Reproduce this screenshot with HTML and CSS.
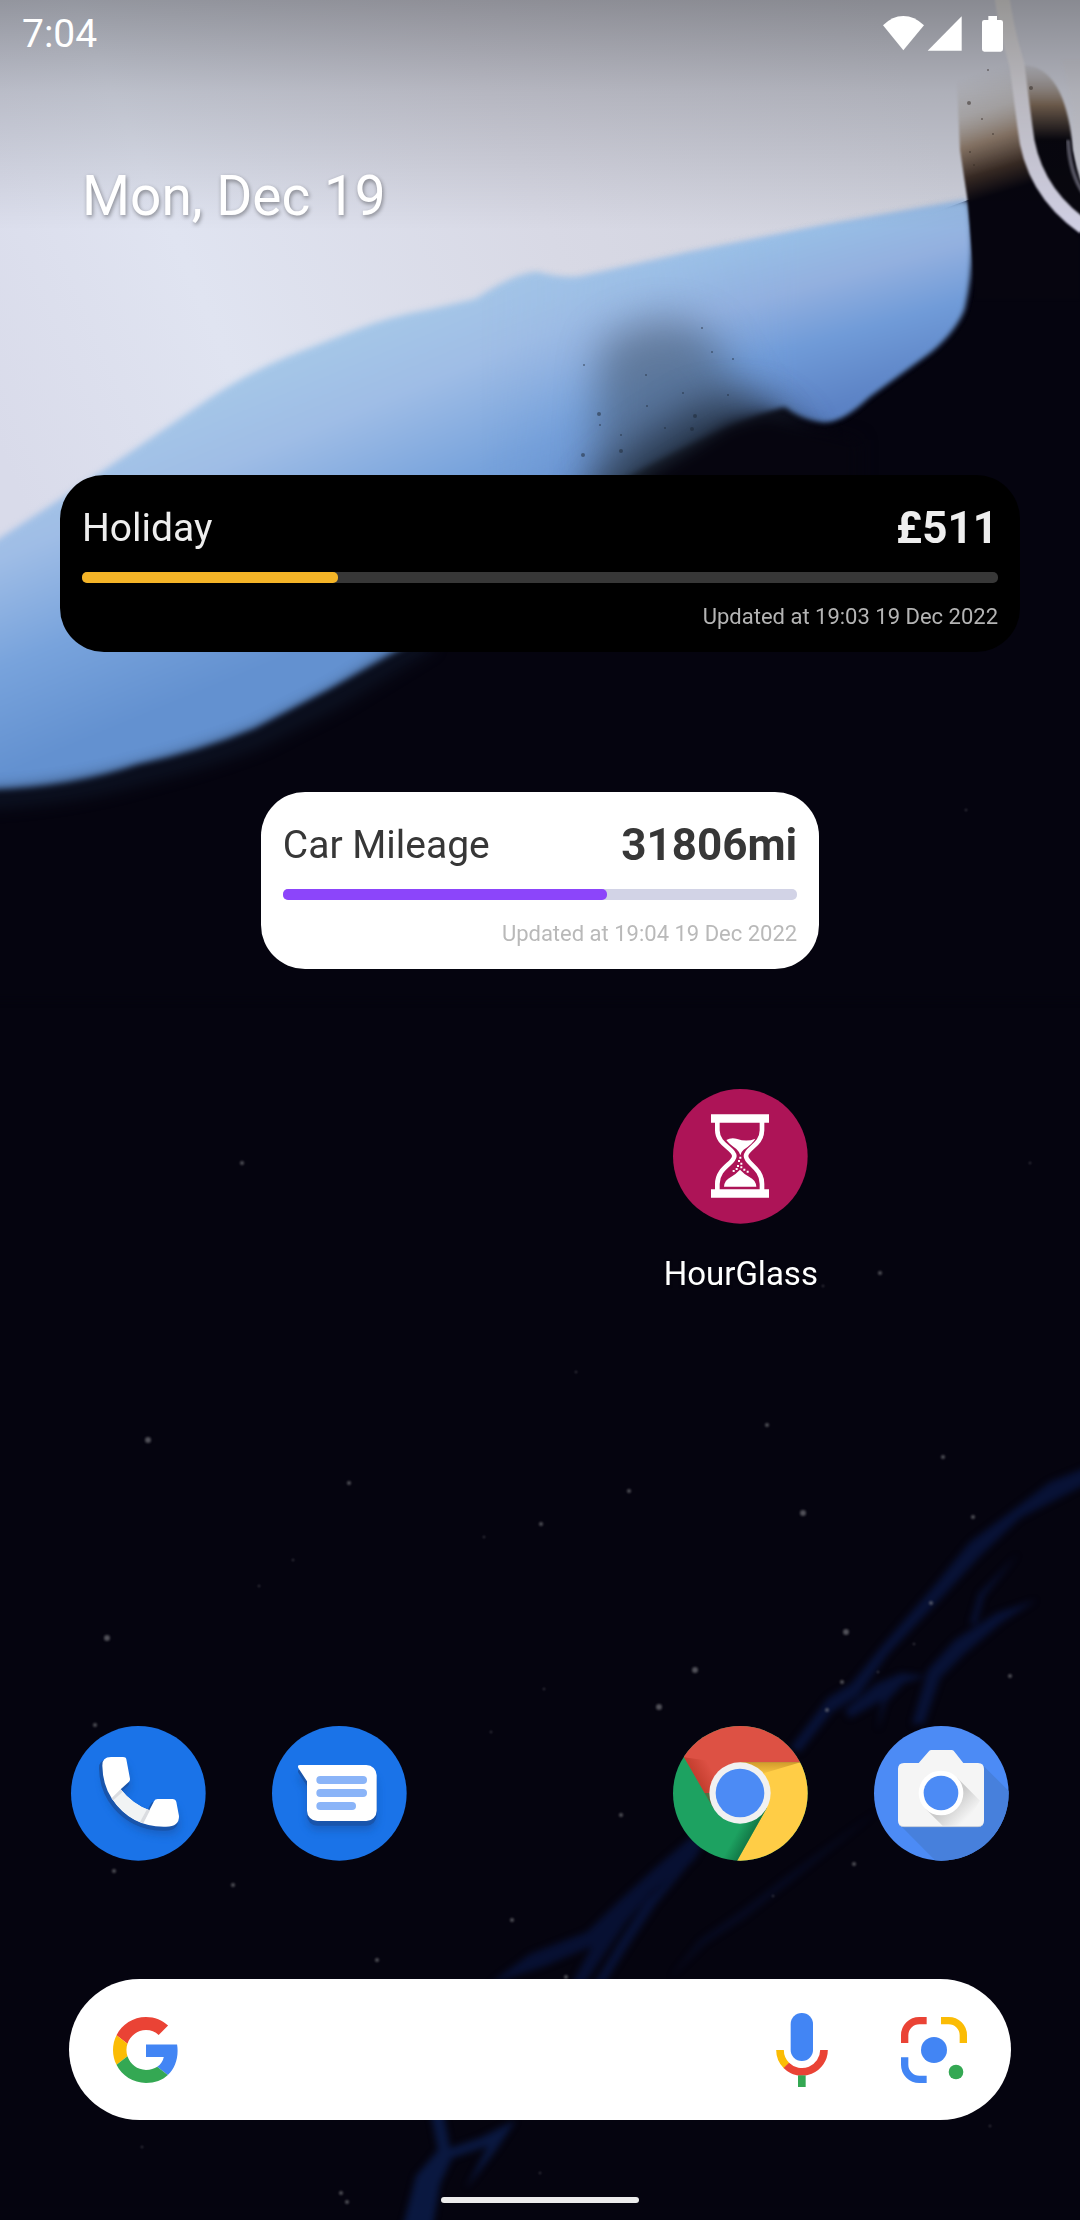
FILE: index.html
```html
<!DOCTYPE html>
<html lang="en">
<head>
<meta charset="utf-8">
<meta name="viewport" content="width=device-width, initial-scale=1">
<title>Home screen</title>
<link rel="stylesheet" href="styles.css">
</head>
<body>
<div class="screen">
  <svg class="wallpaper" viewBox="0 0 1080 2220" preserveAspectRatio="xMidYMin slice" aria-hidden="true">
    <defs>
      <linearGradient id="sky" gradientUnits="userSpaceOnUse" x1="0" y1="450" x2="900" y2="60"><stop offset="0" stop-color="#d9dbea"/><stop offset=".25" stop-color="#e0e4f1"/><stop offset=".6" stop-color="#d8d9e5"/><stop offset="1" stop-color="#cfd1dc"/></linearGradient>
      <linearGradient id="wave" gradientUnits="userSpaceOnUse" x1="290" y1="345" x2="400" y2="610"><stop offset="0" stop-color="#a6c8e8"/><stop offset=".3" stop-color="#9fbde6"/><stop offset=".65" stop-color="#78a3dc"/><stop offset="1" stop-color="#6391d0"/></linearGradient>
      <linearGradient id="tip" gradientUnits="userSpaceOnUse" x1="800" y1="230" x2="850" y2="410"><stop offset="0" stop-color="#98bfe6"/><stop offset=".3" stop-color="#93b0df"/><stop offset=".6" stop-color="#709bd8"/><stop offset="1" stop-color="#5a80c3"/></linearGradient>
      <linearGradient id="tipmask" gradientUnits="userSpaceOnUse" x1="480" y1="0" x2="800" y2="0"><stop offset="0" stop-color="#000"/><stop offset="1" stop-color="#fff"/></linearGradient>
      <mask id="tipfade" maskUnits="userSpaceOnUse" x="0" y="0" width="1080" height="900"><rect width="1080" height="900" fill="url(#tipmask)"/></mask>
      <linearGradient id="burn" gradientUnits="userSpaceOnUse" x1="975" y1="75" x2="1010" y2="190"><stop offset="0" stop-color="#b4afa6" stop-opacity="0"/><stop offset=".3" stop-color="#aba39a" stop-opacity=".5"/><stop offset=".55" stop-color="#897360" stop-opacity=".9"/><stop offset=".8" stop-color="#3a2c25"/><stop offset="1" stop-color="#06050f"/></linearGradient>
      <linearGradient id="burn2" gradientUnits="userSpaceOnUse" x1="0" y1="62" x2="0" y2="140"><stop offset="0" stop-color="#a09a94" stop-opacity=".1"/><stop offset=".55" stop-color="#7b6755"/><stop offset="1" stop-color="#08070f"/></linearGradient>
      <linearGradient id="shade" x1="0" y1="0" x2="0" y2="1"><stop offset="0" stop-color="#000" stop-opacity=".34"/><stop offset=".4" stop-color="#000" stop-opacity=".16"/><stop offset="1" stop-color="#000" stop-opacity="0"/></linearGradient>
      <linearGradient id="wire" x1="0" y1="0" x2="0" y2="1"><stop offset="0" stop-color="#e4e2e0"/><stop offset="1" stop-color="#d0cfe4"/></linearGradient>
      <filter id="b1" color-interpolation-filters="sRGB"><feGaussianBlur stdDeviation="1"/></filter>
      <filter id="b3" x="-10%" y="-10%" width="120%" height="120%" color-interpolation-filters="sRGB"><feGaussianBlur stdDeviation="3"/></filter>
      <filter id="b6" x="-20%" y="-20%" width="140%" height="140%" color-interpolation-filters="sRGB"><feGaussianBlur stdDeviation="8"/></filter>
      <filter id="b18" x="-50%" y="-50%" width="200%" height="200%" color-interpolation-filters="sRGB"><feGaussianBlur stdDeviation="20"/></filter>
      <clipPath id="above"><rect width="1080" height="520"/></clipPath>
    </defs>
    <rect width="1080" height="2220" fill="#05040f"/>
    <path d="M-20 -20H1100V180L968 200L700 300L200 520L-20 640Z" fill="url(#sky)"/>
    <path d="M972 201Q979 257 967 311Q957 333 930 355L868 401Q842 424 823 423L620 480L420 655L331 700L255 738Q200 765 138 776Q60 800 -30 800V1000H1120V196L1050 150Z" fill="#05040f" filter="url(#b3)"/>
    <path d="M-40 565L0 538L62 498L138 447L213 396Q250 372 289 356L358 329Q392 316 427 310L475 299Q512 274 537 272Q560 279 579 277Q640 264 689 253L826 226L967 201Q975 257 963 309Q954 331 930 351L868 396Q842 421 823 421Q800 418 785 405Q730 420 620 480L418 640L331 689L255 729Q200 752 138 765Q60 792 -40 791Z" fill="url(#wave)" filter="url(#b3)"/>
    <path d="M480 299Q512 274 537 272Q560 279 579 277Q640 264 689 253L826 226L967 201Q975 257 963 309Q954 331 930 351L868 396Q842 421 823 421Q800 418 785 405Q730 420 620 480L480 520Z" fill="url(#tip)" filter="url(#b3)" mask="url(#tipfade)"/>
    <path d="M-40 800Q60 798 142 774Q200 760 258 738L336 698L430 640" fill="none" stroke="#10192b" stroke-width="16" opacity=".75" filter="url(#b6)"/>
    <g clip-path="url(#above)">
      <path d="M600 345Q660 300 710 335L750 400L780 430V540H590Z" fill="#3f4d5e" opacity=".5" filter="url(#b18)"/>
      <path d="M590 540V490L640 445L700 405L760 400L800 430V540Z" fill="#18222f" opacity=".7" filter="url(#b18)"/>
      <path d="M605 560L645 478L690 450L730 424L765 415L805 426L860 440V560Z" fill="#06050f" filter="url(#b6)"/>
      <g fill="#1d2734" opacity=".5"><circle cx="584" cy="365" r="1"/><circle cx="599" cy="414" r="2"/><circle cx="583" cy="455" r="2"/><circle cx="621" cy="451" r="2"/><circle cx="647" cy="406" r="1"/><circle cx="683" cy="393" r="1"/><circle cx="695" cy="416" r="2"/><circle cx="733" cy="359" r="1"/><circle cx="702" cy="328" r="1"/><circle cx="712" cy="352" r="1"/><circle cx="665" cy="428" r="1"/><circle cx="646" cy="375" r="1"/><circle cx="621" cy="435" r="1"/><circle cx="600" cy="425" r="1"/><circle cx="728" cy="395" r="1"/><circle cx="692" cy="429" r="2"/></g>
    </g>
    <path d="M956 62Q985 50 1022 70L1027 130L1045 200L1080 240V300H976L968 203L960 150Z" fill="url(#burn)" filter="url(#b1)"/>
    <path d="M1018 66Q1045 62 1060 93Q1070 115 1073 150L1084 192V236L1050 195L1030 150Z" fill="url(#burn2)" filter="url(#b1)"/>
    <path d="M1073 110L1074 145Q1076 180 1090 200V60H1062Z" fill="#cfd0d9" filter="url(#b1)"/>
    <path d="M1068 140Q1070 175 1084 194" fill="none" stroke="#5c5b69" stroke-width="4" filter="url(#b1)"/>
    <path d="M1001 -10Q1006 30 1017 65Q1021 95 1025 127Q1031 190 1084 227" fill="none" stroke="url(#wire)" stroke-width="15" filter="url(#b1)"/>
    <g fill="#362b25" opacity=".5"><circle cx="969" cy="103" r="2"/><circle cx="1031" cy="88" r="2"/><circle cx="988" cy="70" r="1"/><circle cx="970" cy="152" r="1"/><circle cx="982" cy="119" r="1"/><circle cx="993" cy="134" r="1"/><circle cx="974" cy="165" r="1"/></g>
    <rect width="1080" height="230" fill="url(#shade)"/>
    <g fill="#081236" filter="url(#b3)">
      <path d="M1090 1466L1050 1482L1016 1508L970 1542L935 1585L882 1646L851 1684L828 1698L790 1748L800 1752L832 1712L858 1696L888 1654L943 1596L980 1556L1020 1518L1090 1482Z"/>
      <path d="M1036 1600L997 1613L955 1640L928 1670L912 1724L924 1724L940 1678L964 1654L1002 1622ZM979 1594L970 1624L976 1624L984 1596L1018 1554Z"/>
      <path d="M926 1676L901 1673L876 1684L845 1710L850 1718L882 1700L878 1730L886 1702L904 1683Z"/>
      <path d="M716 1822L690 1838L655 1868L620 1900L587 1932L530 1954L490 1984L545 1966L592 1946L572 1984H584L626 1922L650 1894L694 1860Z" opacity=".9"/>
      <path d="M694 1858L646 1900L620 1940L594 1984H604L632 1940L656 1904Z"/>
      <path d="M880 1809L786 1877L740 1912L700 1940L670 1978L704 1944L744 1918L790 1882Z" opacity=".5"/>
      <path d="M430 2110L438 2150L416 2176L402 2230H432L440 2184L452 2158L488 2146L466 2188L496 2150L516 2120L480 2138L450 2148L443 2110Z" fill="#0a1840"/>
    </g>
    <g fill="#85868c" opacity=".6" filter="url(#b1)">
      <circle cx="148" cy="1440" r="3"/><circle cx="803" cy="1513" r="3"/><circle cx="943" cy="1457" r="2"/><circle cx="107" cy="1638" r="3"/><circle cx="695" cy="1670" r="3"/><circle cx="659" cy="1707" r="3"/><circle cx="846" cy="1632" r="3"/><circle cx="842" cy="1682" r="2"/><circle cx="1010" cy="1676" r="2"/><circle cx="931" cy="1603" r="2"/><circle cx="827" cy="1710" r="2"/><circle cx="541" cy="1524" r="2"/><circle cx="629" cy="1491" r="2"/><circle cx="349" cy="1483" r="2"/><circle cx="293" cy="1560" r="1"/><circle cx="973" cy="1517" r="2"/><circle cx="767" cy="1425" r="2"/><circle cx="621" cy="1815" r="2"/><circle cx="854" cy="1864" r="2"/><circle cx="114" cy="1871" r="2"/><circle cx="233" cy="1885" r="2"/><circle cx="512" cy="1920" r="2"/><circle cx="377" cy="1960" r="2"/><circle cx="566" cy="1977" r="2"/><circle cx="773" cy="1896" r="1"/><circle cx="242" cy="1163" r="2"/><circle cx="880" cy="1273" r="2"/><circle cx="823" cy="1286" r="1"/><circle cx="1030" cy="1163" r="1"/><circle cx="966" cy="810" r="1"/><circle cx="576" cy="1372" r="1"/><circle cx="341" cy="2193" r="2"/><circle cx="347" cy="2202" r="2"/><circle cx="540" cy="2173" r="1"/><circle cx="990" cy="2126" r="1"/><circle cx="142" cy="2147" r="1"/><circle cx="491" cy="1732" r="1"/><circle cx="544" cy="1689" r="1"/><circle cx="259" cy="1586" r="1"/><circle cx="484" cy="1537" r="1"/><circle cx="95" cy="1725" r="2"/><circle cx="914" cy="1644" r="1"/><circle cx="878" cy="1672" r="1"/>
    </g>
  </svg>

  <header class="status">
    <time class="clock">7:04</time>
    <svg class="signals" viewBox="69 45 360 108" role="img" aria-label="Wi-Fi, mobile signal, battery"><g fill="#fff"><path d="M69 73Q97 45 130 45T192 73L130 148Z"/><path d="M203 149L305 46V149Z"/><path d="M385 45H411V57H422Q429 57 429 64V145Q429 152 422 152H373Q366 152 366 145V64Q366 57 373 57H385Z"/></g></svg>
  </header>

  <main class="home">
    <time class="date" datetime="2022-12-19">Mon, Dec 19</time>
    <section class="card card-dark">
      <div class="card-head"><label class="card-title" for="holiday">Holiday</label><strong class="card-value">£511</strong></div>
      <progress class="meter" id="holiday" value="28" max="100"></progress>
      <p class="card-note">Updated at 19:03 19 Dec 2022</p>
    </section>
    <section class="card card-light">
      <div class="card-head"><label class="card-title" for="mileage">Car Mileage</label><strong class="card-value">31806mi</strong></div>
      <progress class="meter" id="mileage" value="63" max="100"></progress>
      <p class="card-note">Updated at 19:04 19 Dec 2022</p>
    </section>
    <a class="app app-fourth" href="#hourglass">
      <svg class="app-icon" viewBox="0 0 405 405" aria-hidden="true">
        <circle cx="202" cy="202" r="202" fill="#ad1457"/>
        <g fill="#fff"><path d="M114 76H288V101H114ZM114 301H288V326H114Z"/>
        <path d="M160 153Q174 145 193 150Q221 160 247 149Q239 164 212 182Q204 188 202 199Q199 188 190 180Q166 163 160 153Z"/>
        <path d="M153 293Q154 273 175 263Q190 254 201 242Q212 254 228 263Q249 273 250 293Z"/>
        <path d="M199 203h6v6h-6zM195 213h6v6h-6zM202 221h6v6h-6zM192 228h6v6h-6zM202 232h6v6h-6zM188 237h6v6h-6zM179 243h6v6h-6zM211 239h6v6h-6zM221 245h6v6h-6z"/></g>
        <path d="M133 99V124C133 168 184 178 184 201C184 224 133 236 133 285V303M267 99V124C267 168 219 178 219 201C219 224 267 236 267 285V303" fill="none" stroke="#fff" stroke-width="14"/>
      </svg>
      <span class="app-name">HourGlass</span>
    </a>
  </main>

  <nav class="dock" aria-label="Favourite apps">
    <a class="app" href="#phone" aria-label="Phone">
      <svg class="app-icon" viewBox="0 0 405 405" aria-hidden="true">
        <defs><filter id="soft" x="-30%" y="-30%" width="160%" height="160%"><feGaussianBlur stdDeviation="12"/></filter>
        <path id="handset" d="M94 119Q93 93 120 93H156Q165 93 166 100L177 158Q178 163 174 167L149 190Q185 235 235 253L249 226Q252 219 260 219H304Q314 219 316 228L324 270Q325 302 285 302Q180 305 122 217Q95 175 94 119Z"/></defs>
        <circle cx="202" cy="202" r="202" fill="#1a73e8"/>
        <use href="#handset" x="2" y="24" fill="#134a96" opacity=".45" filter="url(#soft)"/>
        <use href="#handset" x="-10" y="8" fill="#1955ac"/><use href="#handset" x="-3" y="12" fill="#1955ac"/>
        <use href="#handset" fill="#fff"/>
        <path d="M122 217L149 190Q185 235 235 253L207 288Q154 266 122 217Z" fill="#f1f3f4"/>
        <path d="M122 217L149 190L155 197L127 223ZM207 288L228 250L237 253L217 292Z" fill="#dadce0"/>
      </svg>
    </a>
    <a class="app" href="#messages" aria-label="Messages">
      <svg class="app-icon" viewBox="0 0 405 405" aria-hidden="true">
        <defs><path id="bubble" d="M84 117H283A31 31 0 0 1 314 148V254A31 31 0 0 1 283 285H136A31 31 0 0 1 105 254V166L79 126Q75 117 84 117Z"/></defs>
        <circle cx="202" cy="202" r="202" fill="#1a73e8"/>
        <use href="#bubble" y="28" fill="#134a96" opacity=".45" filter="url(#soft)"/>
        <use href="#bubble" y="14" fill="#1955ac"/><use href="#bubble" fill="#fff"/>
        <g fill="#8ab4f8"><rect x="133" y="150" width="152" height="24" rx="12"/><rect x="133" y="189" width="152" height="24" rx="12"/><rect x="133" y="228" width="119" height="24" rx="12"/></g>
      </svg>
    </a>
    <a class="app app-fourth" href="#chrome" aria-label="Chrome">
      <svg class="app-icon" viewBox="0 0 405 405" aria-hidden="true">
        <defs><clipPath id="disc"><circle cx="202" cy="202" r="202"/></clipPath>
        <linearGradient id="rs" gradientUnits="userSpaceOnUse" x1="78" y1="172" x2="125" y2="145"><stop offset="0" stop-color="#a52714" stop-opacity=".45"/><stop offset="1" stop-color="#a52714" stop-opacity="0"/></linearGradient>
        <linearGradient id="ys" gradientUnits="userSpaceOnUse" x1="0" y1="109" x2="0" y2="145"><stop offset="0" stop-color="#bf8620" stop-opacity=".7"/><stop offset="1" stop-color="#bf8620" stop-opacity=".1"/></linearGradient>
        <linearGradient id="gs" gradientUnits="userSpaceOnUse" x1="232" y1="335" x2="194" y2="314"><stop offset="0" stop-color="#0b5d36" stop-opacity=".6"/><stop offset="1" stop-color="#0b5d36" stop-opacity="0"/></linearGradient></defs>
        <g clip-path="url(#disc)"><rect width="405" height="405" fill="#1da261"/>
        <path d="M201 109H405V405H192L281 247Z" fill="#ffcd46"/>
        <path d="M33 94L-10 0H405V109H201V201H95Z" fill="#dd5144"/>
        <path d="M33 94L121 247L201 201L150 110Z" fill="url(#rs)"/>
        <path d="M201 109H383L260 145Z" fill="url(#ys)"/>
        <path d="M281 247L192 405H130L215 270Z" fill="url(#gs)"/></g>
        <circle cx="201" cy="201" r="92" fill="#f1f1f1"/><circle cx="201" cy="201" r="73" fill="#4c8bf5"/>
      </svg>
    </a>
    <a class="app" href="#camera" aria-label="Camera">
      <svg class="app-icon" viewBox="0 0 405 405" aria-hidden="true">
        <defs><linearGradient id="ls" gradientUnits="userSpaceOnUse" x1="230" y1="230" x2="278" y2="278"><stop offset="0" stop-color="#b5b5b5"/><stop offset="1" stop-color="#f5f5f5"/></linearGradient></defs>
        <circle cx="202" cy="202" r="202" fill="#4c8bf5"/>
        <path d="M325 116L405 196V405H185L78 297Z" fill="#4780dc" clip-path="url(#disc)"/>
        <path d="M90 111H134L166 74Q168 72 172 72H233Q237 72 239 74L268 111H312Q330 111 330 129V284Q330 302 312 302H90Q72 302 72 284V129Q72 111 90 111Z" fill="#f5f5f5"/>
        <path d="M77 297Q82 302 90 302H312Q320 302 325 297" fill="none" stroke="#c9cbd0" stroke-width="2"/>
        <path d="M248 154L318 224L272 299H206L154 248Z" fill="url(#ls)" opacity=".65"/>
        <circle cx="201" cy="201" r="67" fill="#fff"/><circle cx="201" cy="201" r="52" fill="#4c8bf5"/>
      </svg>
    </a>
  </nav>

  <form class="search" role="search">
    <svg class="glyph" viewBox="0 0 48 48" role="img" aria-label="Google"><path fill="#ea4335" d="M24 9.500c3.540 0 6.710 1.220 9.210 3.600l6.850-6.850C35.900 2.380 30.470 0 24 0 14.620 0 6.510 5.380 2.560 13.220l7.980 6.190C12.430 13.720 17.740 9.500 24 9.500z"/><path fill="#4285f4" d="M46.980 24.550c0-1.570-.15-3.090-.38-4.550H24v9.020h12.940c-.58 2.960-2.260 5.480-4.780 7.180l7.730 6c4.510-4.180 7.090-10.360 7.090-17.650z"/><path fill="#fbbc05" d="M10.530 28.590c-.48-1.450-.76-2.990-.76-4.590s.27-3.140.76-4.590l-7.980-6.190C.92 16.460 0 20.120 0 24c0 3.880.92 7.540 2.560 10.780l7.970-6.190z"/><path fill="#34a853" d="M24 48c6.480 0 11.930-2.130 15.890-5.810l-7.730-6c-2.150 1.450-4.920 2.300-8.160 2.300-6.260 0-11.570-4.220-13.470-9.910l-7.980 6.190C6.510 42.620 14.620 48 24 48z"/></svg>
    <input class="search-box" type="search" aria-label="Search">
    <button class="tool" type="button" aria-label="Voice search">
      <svg class="mic" viewBox="0 0 156 222" aria-hidden="true"><rect x="44" width="67" height="144" rx="33" fill="#4285f4"/><g fill="none" stroke-width="23"><path d="M12 111Q12 139 32 158" stroke="#fbbc05"/><path d="M144 111A66 66 0 0 1 31 157" stroke="#ea4335"/></g><path d="M66 187H89V222H66Z" fill="#34a853"/></svg>
    </button>
    <button class="tool" type="button" aria-label="Lens">
      <svg class="glyph" viewBox="0 0 198 198" aria-hidden="true"><g fill="none" stroke-width="22"><path d="M11 78V55A44 44 0 0 1 55 11H77" stroke="#ea4335"/><path d="M120 11H143A44 44 0 0 1 187 55V78" stroke="#fbbc05"/><path d="M11 121V143A44 44 0 0 0 55 187H77" stroke="#4285f4"/></g><circle cx="99" cy="99" r="39" fill="#4285f4"/><circle cx="165" cy="165" r="22" fill="#34a853"/></svg>
    </button>
  </form>
  <footer class="gesture"><span class="handle"></span></footer>
</div>
</body>
</html>
```
FILE: styles.css
```css
* { box-sizing: border-box; }

body {
  margin: 0;
  background: #05040f;
  color: #fff;
  font-family: Roboto, "Noto Sans", sans-serif;
}

.screen {
  position: relative;
  isolation: isolate;
  display: flex;
  flex-direction: column;
  min-height: 100vh;
  overflow: hidden;
}

.wallpaper {
  position: absolute;
  inset: 0;
  z-index: -1;
  width: 100%;
  height: 100%;
}

.status {
  display: flex;
  align-items: center;
  justify-content: space-between;
  height: 68px;
  padding: 0 77px 0 22px;
}

.clock { font-size: 39px; line-height: 48px; }
.signals { width: 120px; height: 36px; }

.home,
.dock {
  display: grid;
  grid-template-columns: repeat(5, 1fr);
  padding: 0 38px;
}

.home {
  flex: 1;
  align-content: start;
  padding-top: 95px;
}

.date {
  grid-column: 1 / -1;
  margin: 0 44px 246px;
  font-size: 55px;
  line-height: 66px;
  text-shadow: 1px 2px 4px rgba(0, 0, 0, .4);
}

.card {
  grid-column: 1 / -1;
  margin: 0 22px 140px;
  padding: 26px 22px 22px;
  border-radius: 44px;
}

.card-dark { background: #000; color: #eee; }

.card-light {
  grid-column: 2 / 5;
  margin-bottom: 120px;
  background: #fff;
  color: #373737;
}

.card-head {
  display: flex;
  align-items: center;
  justify-content: space-between;
  height: 54px;
  white-space: nowrap;
}

.card-title { font-size: 39px; }
.card-value { font-size: 44px; font-weight: 700; }

.meter {
  display: block;
  width: 100%;
  height: 11px;
  margin: 17px 0 21px;
  border: 0;
  appearance: none;
  color: #f4b427;
}
.meter::-webkit-progress-bar { border-radius: 5px; background: #373737; }
.meter::-webkit-progress-value { border-radius: 5px; background: #f4b427; }
.card-light .meter::-webkit-progress-bar { background: #d2d3e6; }
.card-light .meter::-webkit-progress-value { background: #8c45fa; }

.card-note {
  margin: 0;
  color: #b4b4b4;
  font-size: 22px;
  line-height: 26px;
  text-align: right;
}
.card-light .card-note { color: #b9b9b9; }

.app {
  display: flex;
  flex-direction: column;
  align-items: center;
  gap: 30px;
  color: #fff;
  text-decoration: none;
}
.app-fourth { grid-column: 4; }
.app-icon { display: block; width: 135px; height: 135px; }
.app-name {
  font-size: 33px;
  line-height: 40px;
  text-shadow: 0 1px 3px rgba(0, 0, 0, .5);
}

.search {
  display: flex;
  align-items: center;
  height: 141px;
  margin: 118px 69px 0;
  padding: 0 44px;
  border-radius: 71px;
  background: #fff;
}

.glyph { display: block; width: 66px; height: 66px; flex: none; }
.mic { display: block; width: 52px; height: 74px; }

.search-box {
  flex: 1;
  min-width: 0;
  height: 80px;
  margin: 0 20px;
  border: 0;
  outline: 0;
  background: none;
  color: #373737;
  font: inherit;
  font-size: 39px;
}

.tool {
  margin: 0;
  padding: 0;
  border: 0;
  background: none;
}
.tool + .tool { margin-left: 73px; }

.gesture {
  display: flex;
  align-items: end;
  justify-content: center;
  height: 100px;
  padding-bottom: 17px;
}
.handle {
  width: 198px;
  height: 6px;
  border-radius: 3px;
  background: #ececec;
}
```
